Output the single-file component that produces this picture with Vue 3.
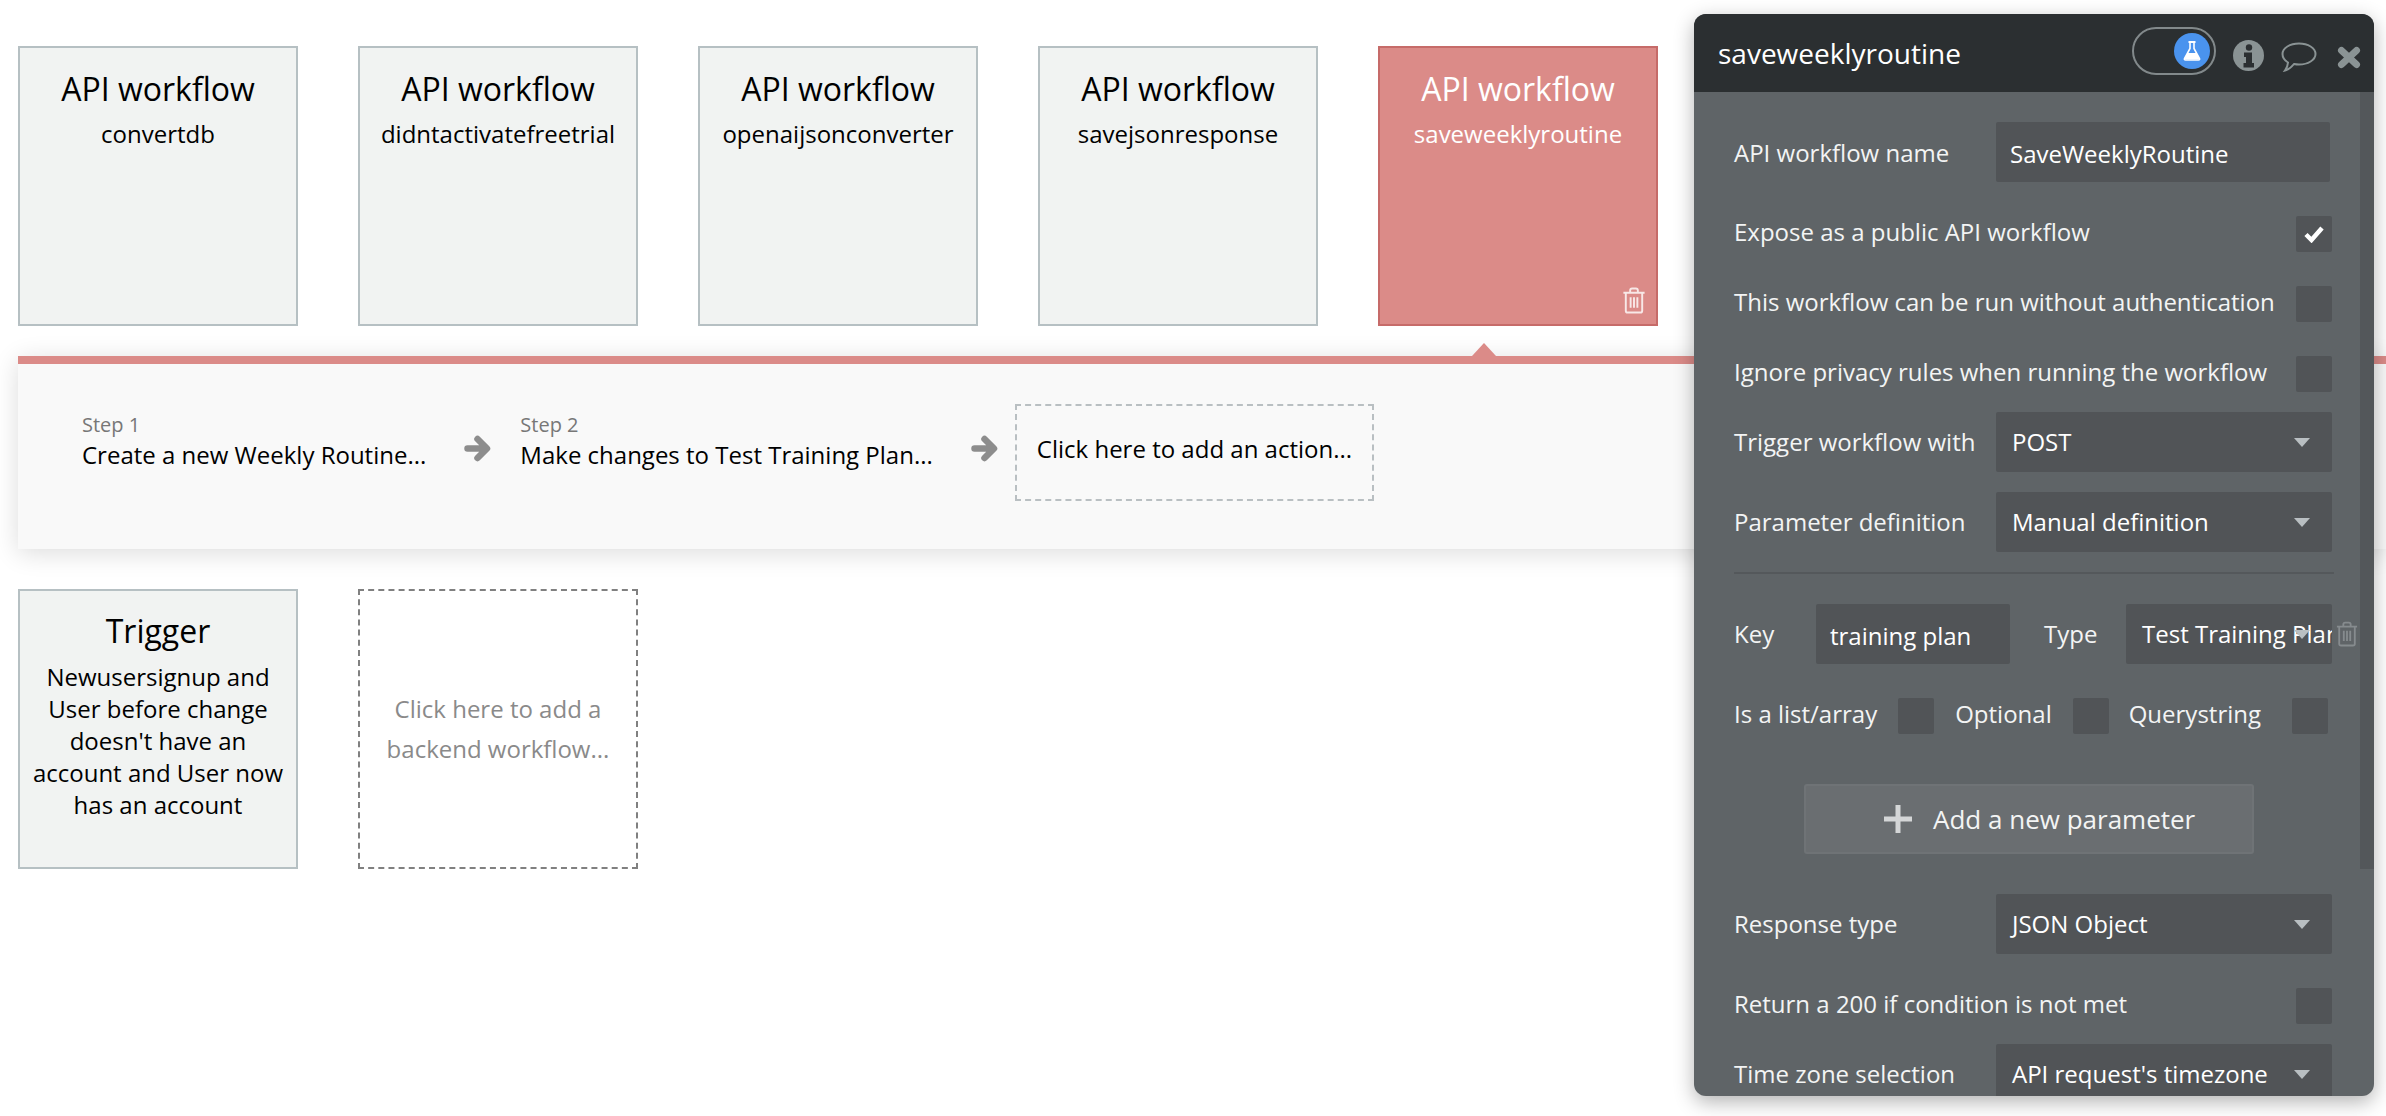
<script setup>
const topCards = [
  { title: 'API workflow', sub: 'convertdb' },
  { title: 'API workflow', sub: 'didntactivatefreetrial' },
  { title: 'API workflow', sub: 'openaijsonconverter' },
  { title: 'API workflow', sub: 'savejsonresponse' },
]
</script>

<template>
  <div class="page">
    <section class="cards">
      <article v-for="c in topCards" :key="c.sub" class="card">
        <h3>{{ c.title }}</h3>
        <p>{{ c.sub }}</p>
      </article>
      <article class="card active">
        <h3>API workflow</h3>
        <p>saveweeklyroutine</p>
        <svg class="card-trash" viewBox="0 0 24 28" fill="none" stroke="currentColor" stroke-width="2">
          <path d="M1 6h22M8 6V3.500Q8 1.500 10 1.500h4Q16 1.500 16 3.500V6M3.500 6v18.500q0 2 2 2h13q2 0 2-2V6M8.500 10.500v11M12 10.500v11M15.500 10.500v11" />
        </svg>
      </article>
    </section>

    <section class="steps">
      <span class="pointer"></span>
      <div class="step">
        <small>Step 1</small>
        <span>Create a new Weekly Routine...</span>
      </div>
      <svg class="arrow" viewBox="0 0 27 27" fill="none" stroke="#8d8d8d" stroke-width="6.500" stroke-linecap="round" stroke-linejoin="round">
        <path d="M3.500 13.500H21M13.500 4l9.500 9.500-9.500 9.500" />
      </svg>
      <div class="step later">
        <small>Step 2</small>
        <span>Make changes to Test Training Plan...</span>
      </div>
      <svg class="arrow" viewBox="0 0 27 27" fill="none" stroke="#8d8d8d" stroke-width="6.500" stroke-linecap="round" stroke-linejoin="round">
        <path d="M3.500 13.500H21M13.500 4l9.500 9.500-9.500 9.500" />
      </svg>
      <div class="add-action">Click here to add an action...</div>
    </section>

    <section class="cards">
      <article class="card trigger">
        <h3>Trigger</h3>
        <p>Newusersignup and User before change doesn't have an account and User now has an account</p>
      </article>
      <article class="card placeholder">Click here to add a backend workflow...</article>
    </section>

    <aside class="panel">
      <header class="panel-head">
        <span class="panel-title">saveweeklyroutine</span>
        <div class="toggle">
          <span class="knob">
            <svg viewBox="0 0 18 20" width="18" height="20">
              <path d="M5.500 1h7" stroke="#fff" stroke-width="1.800" fill="none" />
              <path d="M7 1v6.500L1.500 17.500q-.5 1.500 1 1.500h13q1.500 0 1-1.500L11 7.500V1" stroke="#fff" stroke-width="1.600" fill="none" />
              <path d="M4.500 12h9l3 6.500H1.500z" fill="#fff" />
            </svg>
          </span>
        </div>
        <svg class="icon-info" viewBox="0 0 31 31">
          <circle cx="15.500" cy="15.500" r="15.500" fill="#8a9394" />
          <circle cx="16" cy="7.500" r="3.200" fill="#2b2f31" />
          <path d="M11 12.500h8v10.500h2v4.500H10.500V23h2.500v-6h-2z" fill="#2b2f31" />
        </svg>
        <svg class="icon-chat" viewBox="0 0 36 30" fill="none" stroke="#8a9394" stroke-width="2">
          <path d="M18 1.500c9 0 16.500 4.500 16.500 10.500S27 22.500 18 22.500c-2 0-3.500-.2-5-.5-2 2.500-5 5.500-9 6.500 1.800-2.500 2.800-5 3-8C3.800 18.500 1.500 15.500 1.500 12 1.500 6 9 1.500 18 1.500z" />
        </svg>
        <svg class="icon-close" viewBox="0 0 24 23" fill="none" stroke="#8a9394" stroke-width="7" stroke-linecap="round">
          <path d="M4.500 4.500l15 14M19.500 4.500l-15 14" />
        </svg>
      </header>

      <div class="panel-body">
        <span class="scrollbar"></span>

        <div class="row first">
          <label>API workflow name</label>
          <div class="input wide">SaveWeeklyRoutine</div>
        </div>
        <div class="row check-row">
          <label>Expose as a public API workflow</label>
          <span class="check">
            <svg viewBox="0 0 20 18" width="20" height="18" fill="none" stroke="#fff" stroke-width="4.500">
              <path d="M2 9.500l5.500 5.500L18 3" />
            </svg>
          </span>
        </div>
        <div class="row check-row">
          <label>This workflow can be run without authentication</label>
          <span class="check"></span>
        </div>
        <div class="row check-row">
          <label>Ignore privacy rules when running the workflow</label>
          <span class="check"></span>
        </div>
        <div class="row select-row">
          <label>Trigger workflow with</label>
          <div class="select">POST<i></i></div>
        </div>
        <div class="row select-row">
          <label>Parameter definition</label>
          <div class="select">Manual definition<i></i></div>
        </div>
        <hr />
        <div class="row key-row">
          <label class="key-label">Key</label>
          <div class="input key">training plan</div>
          <label class="type-label">Type</label>
          <div class="select type"><span>Test Training Plan</span><i></i></div>
          <svg class="param-trash" viewBox="0 0 24 28" fill="none" stroke="#868b8e" stroke-width="2">
            <path d="M1 6h22M8 6V3.500Q8 1.500 10 1.500h4Q16 1.500 16 3.500V6M3.500 6v18.500q0 2 2 2h13q2 0 2-2V6M8.500 10.500v11M12 10.500v11M15.500 10.500v11" />
          </svg>
        </div>
        <div class="row flags">
          <label>Is a list/array</label>
          <span class="check"></span>
          <label class="flag-b">Optional</label>
          <span class="check"></span>
          <label class="flag-c">Querystring</label>
          <span class="check"></span>
        </div>
        <div class="add-param">
          <svg viewBox="0 0 28 28" width="28" height="28">
            <path d="M14 0v28M0 14h28" stroke="#d4d6d7" stroke-width="5" />
          </svg>
          <span>Add a new parameter</span>
        </div>
        <div class="row response">
          <label>Response type</label>
          <div class="select">JSON Object<i></i></div>
        </div>
        <div class="row check-row">
          <label>Return a 200 if condition is not met</label>
          <span class="check"></span>
        </div>
        <div class="row select-row">
          <label>Time zone selection</label>
          <div class="select">API request's timezone<i></i></div>
        </div>
      </div>
    </aside>
  </div>
</template>

<style scoped>
.page {
  position: relative;
  box-sizing: border-box;
  width: 2386px;
  height: 1116px;
  padding-top: 46px;
  overflow: hidden;
  background: #fff;
  font-family: "Open Sans", sans-serif;
  font-size: 24px;
  color: #000;
}
.cards {
  display: flex;
  gap: 60px;
  padding-left: 18px;
}
.card {
  position: relative;
  box-sizing: border-box;
  width: 280px;
  height: 280px;
  padding: 20px 8px 0;
  border: 2px solid #b6c0c3;
  background: #f1f3f2;
  text-align: center;
}
.card h3 {
  margin: 0;
  font-size: 32px;
  font-weight: 400;
  line-height: 42px;
}
.card p {
  margin: 8px 0 0;
  font-size: 24px;
  line-height: 32px;
}
.card.active {
  border-color: #c66b69;
  background: #db8b88;
  color: #fff;
}
.card.trigger h3 {
  margin-top: -1px;
}
.card.trigger p {
  margin-top: 9px;
}
.card-trash {
  position: absolute;
  right: 10px;
  bottom: 10px;
  width: 24px;
  height: 27px;
  color: rgba(255, 255, 255, 0.8);
}
.card.placeholder {
  display: flex;
  align-items: center;
  justify-content: center;
  padding: 0 20px;
  border: 2px dashed #808080;
  background: #fff;
  color: #8a8a8a;
  line-height: 40px;
}

.steps {
  position: relative;
  display: flex;
  align-items: center;
  box-sizing: border-box;
  height: 193px;
  margin: 30px 0 40px 18px;
  padding: 40px 0 48px 64px;
  border-top: 8px solid #db8b88;
  background: #f9f9f9;
  box-shadow: 0 4px 24px rgba(0, 0, 0, 0.14);
}
.pointer {
  position: absolute;
  top: -21px;
  left: 1454px;
  width: 0;
  height: 0;
  border-right: 12.500px solid transparent;
  border-bottom: 13px solid #db8b88;
  border-left: 12.500px solid transparent;
}
.step {
  display: flex;
  flex-direction: column;
  margin-bottom: 22px;
  white-space: nowrap;
}
.step.later {
  margin-left: 29px;
}
.step small {
  font-size: 20px;
  line-height: 26px;
  color: #777;
}
.step span {
  line-height: 33px;
}
.arrow {
  flex: none;
  width: 27px;
  height: 27px;
  margin: 0 0 8px 38px;
}
.add-action {
  box-sizing: border-box;
  width: 359px;
  height: 97px;
  margin-left: 17px;
  padding: 0 0 8px 20px;
  border: 2px dashed #b9bfc2;
  line-height: 85px;
  white-space: nowrap;
}

.panel {
  position: absolute;
  top: 14px;
  left: 1694px;
  display: flex;
  flex-direction: column;
  width: 680px;
  height: 1082px;
  overflow: hidden;
  border-radius: 12px;
  background: #5f6467;
  box-shadow: 0 6px 20px rgba(0, 0, 0, 0.3);
  color: #f3f4f4;
}
.panel-head {
  position: relative;
  flex: none;
  display: flex;
  align-items: center;
  height: 78px;
  padding-left: 24px;
  background: #2b2f31;
}
.panel-title {
  flex: 1;
  font-size: 28px;
  color: #fff;
}
.toggle {
  display: flex;
  align-items: center;
  justify-content: flex-end;
  box-sizing: border-box;
  width: 84px;
  height: 48px;
  margin-top: -4px;
  padding-right: 4px;
  border: 2px solid #82898b;
  border-radius: 24px;
}
.knob {
  display: flex;
  align-items: center;
  justify-content: center;
  width: 36px;
  height: 36px;
  border-radius: 50%;
  background: #4a93ee;
}
.icon-info {
  width: 31px;
  height: 31px;
  margin: 5px 0 0 17px;
}
.icon-chat {
  width: 36px;
  height: 30px;
  margin: 8px 0 0 17px;
}
.icon-close {
  width: 24px;
  height: 23px;
  margin: 9px 13px 0 20px;
}
.panel-body {
  position: relative;
  flex: 1;
  min-height: 0;
  padding: 30px 42px 0 40px;
  overflow: hidden;
}
.scrollbar {
  position: absolute;
  top: 0;
  right: 0;
  width: 14px;
  height: 777px;
  background: #53575a;
}
.row {
  display: flex;
  align-items: center;
  justify-content: space-between;
  white-space: nowrap;
}
.check-row {
  height: 36px;
  margin-top: 34px;
}
.check-row label,
.flags label {
  margin-bottom: 6px;
}
.select-row {
  height: 60px;
  margin-top: 20px;
}
.select-row label,
.response label,
.key-row label {
  margin-bottom: 2px;
}
.first {
  padding-right: 2px;
}
.input,
.select {
  position: relative;
  box-sizing: border-box;
  height: 60px;
  border-radius: 2px;
  background: #515457;
  color: #fff;
}
.input {
  padding-top: 4px;
  line-height: 56px;
}
.wide {
  width: 334px;
  padding-left: 14px;
}
.select {
  flex: none;
  width: 336px;
  padding-left: 16px;
  line-height: 60px;
}
.select i {
  position: absolute;
  top: 26px;
  right: 22px;
  width: 0;
  height: 0;
  border-top: 9px solid #b9bfc2;
  border-right: 8px solid transparent;
  border-left: 8px solid transparent;
}
.check {
  flex: none;
  display: flex;
  align-items: center;
  justify-content: center;
  width: 36px;
  height: 36px;
  border-radius: 2px;
  background: #515457;
}
hr {
  height: 2px;
  margin: 20px -2px 0 0;
  border: 0;
  background: #54585b;
}
.key-row {
  position: relative;
  height: 60px;
  justify-content: flex-start;
  margin-top: 30px;
}
.key-label {
  width: 82px;
}
.key {
  width: 194px;
  padding-left: 14px;
}
.type-label {
  width: 82px;
  margin-left: 34px;
}
.type {
  width: 206px;
  overflow: hidden;
  white-space: nowrap;
}
.param-trash {
  position: absolute;
  top: 16px;
  right: -26px;
  width: 22px;
  height: 28px;
}
.flags {
  height: 36px;
  justify-content: flex-start;
  margin-top: 34px;
}
.flags .check:nth-of-type(1) {
  margin-left: 21px;
}
.flag-b {
  margin-left: 21px;
}
.flags .check:nth-of-type(2) {
  margin-left: 21px;
}
.flag-c {
  margin-left: 20px;
}
.flags .check:nth-of-type(3) {
  margin-left: 31px;
}
.add-param {
  display: flex;
  align-items: center;
  box-sizing: border-box;
  width: 450px;
  height: 70px;
  margin: 50px 0 0 70px;
  padding-left: 78px;
  border: 2px solid #6f7376;
  border-radius: 3px;
  background: #6a6e71;
  color: #f3f4f4;
}
.add-param span {
  margin-left: 21px;
  font-size: 26px;
}
.response {
  height: 60px;
  margin-top: 40px;
}
</style>
